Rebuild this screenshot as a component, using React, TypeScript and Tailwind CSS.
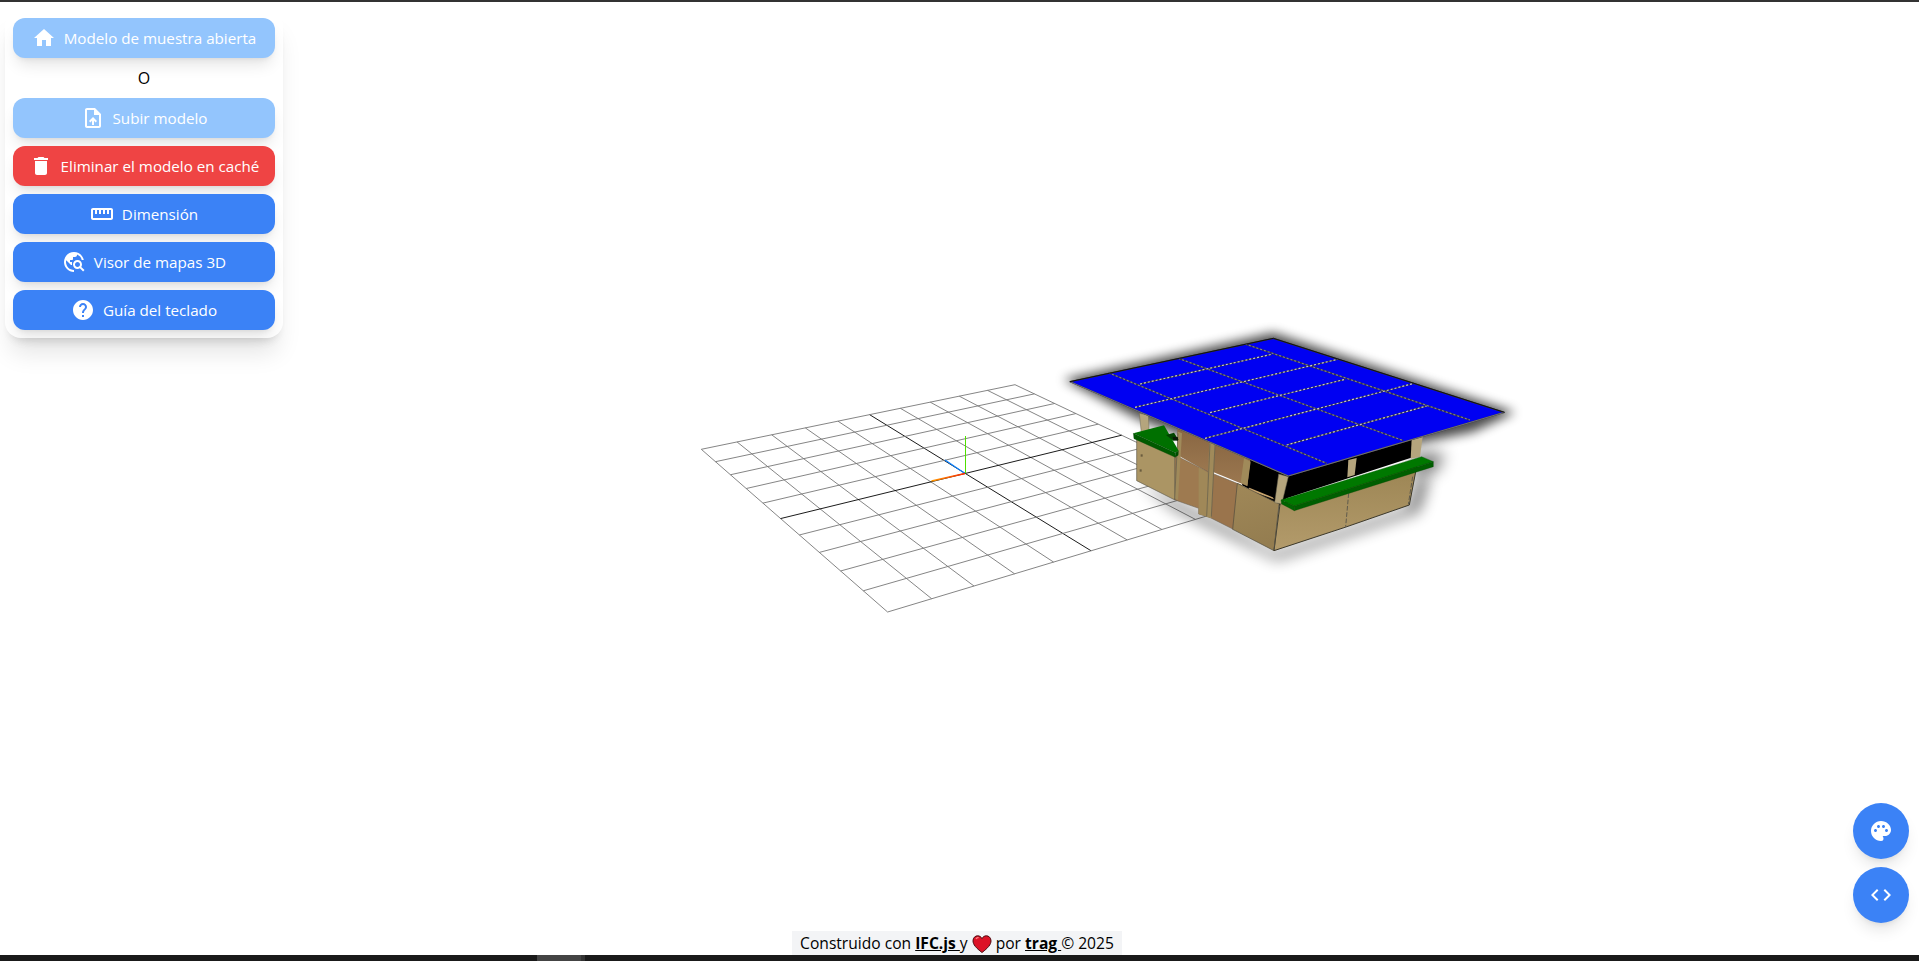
import React from "react";
import { MdHome, MdOutlineUploadFile, MdDelete, MdOutlineStraighten, MdTravelExplore, MdHelp, MdPalette, MdCode } from "react-icons/md";

type P = [number, number];

function homography(a: P, b: P, c: P, d: P) {
  const [x0, y0] = a, [x1, y1] = b, [x2, y2] = c, [x3, y3] = d;
  const dx1 = x1 - x2, dx2 = x3 - x2, sx = x0 - x1 + x2 - x3;
  const dy1 = y1 - y2, dy2 = y3 - y2, sy = y0 - y1 + y2 - y3;
  const den = dx1 * dy2 - dx2 * dy1;
  const g = (sx * dy2 - dx2 * sy) / den;
  const h = (dx1 * sy - sx * dy1) / den;
  const A = x1 - x0 + g * x1, B = x3 - x0 + h * x3, C = x0;
  const D = y1 - y0 + g * y1, E = y3 - y0 + h * y3, F = y0;
  return (u: number, v: number): P => {
    const w = g * u + h * v + 1;
    return [(A * u + B * v + C) / w, (D * u + E * v + F) / w];
  };
}

const grid = homography([701.3, 449.3], [1015, 384.7], [1258.9, 500.3], [887.6, 612]);
const steps = Array.from({ length: 11 }, (_, i) => i);

function GridLine({ a, b, color }: { a: P; b: P; color: string }) {
  return <line x1={a[0]} y1={a[1]} x2={b[0]} y2={b[1]} stroke={color} strokeWidth={0.9} />;
}

const longSeams: [number, number, number, number][] = [
  [205, 158, 860, 430],
  [415, 115, 1090, 362],
  [615, 72, 1290, 300],
];
const crossSeams: [number, number, number, number][] = [
  [300, 192, 695, 103],
  [285, 262, 893, 118],
  [510, 278, 915, 178],
  [495, 355, 1122, 190],
  [740, 375, 1160, 258],
];

function Scene() {
  const roof = "90,185 700,55 1393,277 745,468";
  return (
    <svg className="absolute top-0 left-0 pointer-events-none" width={1919} height={961} viewBox="0 0 1919 961">
      <defs>
        <filter id="blurA" filterUnits="userSpaceOnUse" x="-200" y="-200" width="2000" height="1200">
          <feGaussianBlur stdDeviation="16" />
        </filter>
        <filter id="blurB" filterUnits="userSpaceOnUse" x="-200" y="-200" width="2000" height="1200">
          <feGaussianBlur stdDeviation="22" />
        </filter>
        <linearGradient id="tanFront" x1="0" y1="0" x2="0.2" y2="1">
          <stop offset="0" stopColor="#a08858" />
          <stop offset="1" stopColor="#947d50" />
        </linearGradient>
        <linearGradient id="tanRight" x1="0" y1="0" x2="0" y2="1">
          <stop offset="0" stopColor="#9c8554" />
          <stop offset="1" stopColor="#b39b6b" />
        </linearGradient>
        <linearGradient id="brownWall" x1="0" y1="0" x2="0" y2="1">
          <stop offset="0" stopColor="#886642" />
          <stop offset="1" stopColor="#9c7850" />
        </linearGradient>
        <linearGradient id="redAxis" x1="0" y1="0" x2="1" y2="0">
          <stop offset="0" stopColor="#ff9900" />
          <stop offset="1" stopColor="#ff2a00" />
        </linearGradient>
      </defs>

      {steps.map((i) => (
        <GridLine key={`u${i}`} a={grid(i / 10, 0)} b={grid(i / 10, 1)} color={i === 5 ? "#000000" : "#777777"} />
      ))}
      {steps.map((i) => (
        <GridLine key={`v${i}`} a={grid(0, i / 10)} b={grid(1, i / 10)} color={i === 5 ? "#000000" : "#777777"} />
      ))}

      <line x1="965.5" y1="436" x2="965.5" y2="473.5" stroke="#4fe000" strokeWidth={1} />
      <line x1="945" y1="460" x2="965" y2="473.5" stroke="#0a80ff" strokeWidth={1.2} />
      <line x1="931.5" y1="481" x2="965" y2="473.5" stroke="url(#redAxis)" strokeWidth={1.4} />

      <g transform="translate(1040 320) scale(0.33333)">
        {/* soft shadows */}
        <polygon points="295,480 410,545 580,630 705,700 1105,565 1135,470 1165,480 1135,575 710,718 400,565" fill="#000" opacity="0.62" filter="url(#blurB)" />
        <polygon points="1120,395 1215,400 1190,455 1120,475" fill="#000" opacity="0.5" filter="url(#blurB)" />
        <polygon points="70,178 700,38 1425,277 1300,335 1110,375 745,470 300,300" fill="#000" opacity="0.7" filter="url(#blurA)" />

        {/* interior */}
        <polygon points="625,415 1118,340 1118,412 740,535 718,558 606,496" fill="#000" />
        <polygon points="628,503 698,532 702,538 625,510" fill="#c9a56e" />

        {/* left tan wall */}
        <polygon points="290,350 405,405 405,540 290,482" fill="#ab9564" stroke="#5f5a4c" strokeWidth="2" />
        <rect x="302" y="403" width="6" height="7" fill="#6a5c3e" />
        <rect x="299" y="448" width="6" height="7" fill="#6a5c3e" />

        {/* brown walls */}
        <polygon points="412,325 510,350 510,460 412,405" fill="url(#brownWall)" />
        <polygon points="510,350 632,410 622,498 510,452" fill="url(#brownWall)" />
        <polygon points="405,405 510,458 510,592 476,582 476,565 405,540" fill="#9e7a50" stroke="#5f5a4c" strokeWidth="1.5" />
        <polygon points="476,442 505,458 505,592 476,582" fill="#a08858" />
        <polygon points="505,455 606,496 580,628 505,590" fill="#9a744c" stroke="#5f5a4c" strokeWidth="1.5" />

        {/* front tan */}
        <polygon points="592,490 718,552 702,692 578,628" fill="url(#tanFront)" stroke="#4f4a3c" strokeWidth="2" />
        <polygon points="720,552 1130,440 1108,555 915,622 702,692" fill="url(#tanRight)" stroke="#3a3628" strokeWidth="3" />

        {/* seams on walls */}
        <polygon points="414,335 426,340 414,540 403,535" fill="#a08a5a" />
        <line x1="414" y1="340" x2="404" y2="538" stroke="#5f5a4c" strokeWidth="2" />
        <polygon points="508,365 526,372 514,595 498,590" fill="#a08a5a" />
        <line x1="510" y1="370" x2="500" y2="590" stroke="#5f5a4c" strokeWidth="2" />
        <line x1="525" y1="375" x2="514" y2="590" stroke="#5f5a4c" strokeWidth="2" />
        <polygon points="612,415 632,425 622,498 602,488" fill="#a08a5a" />
        <line x1="717" y1="555" x2="702" y2="690" stroke="#5f5a4c" strokeWidth="2" />
        <line x1="926" y1="520" x2="917" y2="620" stroke="#5f5a4c" strokeWidth="3" strokeDasharray="14 5" />
        <line x1="1118" y1="470" x2="1105" y2="553" stroke="#5f5a4c" strokeWidth="3" strokeDasharray="14 5" />

        {/* posts */}
        <polygon points="298,280 325,285 328,345 305,348" fill="#b5a57d" stroke="#6b6550" strokeWidth="1.5" />
        <polygon points="716,462 745,470 725,552 704,548" fill="#b5a57d" stroke="#6b6550" strokeWidth="1.5" />
        <polygon points="925,420 950,414 944,465 922,472" fill="#b5a57d" />
        <polygon points="1115,358 1148,350 1140,410 1112,416" fill="#b5a57d" />

        {/* left green */}
        <polygon points="280,340 372,316 416,392 406,398" fill="#007000" />
        <polygon points="280,340 406,398 406,412 282,356" fill="#005a00" stroke="#003f00" strokeWidth="1" />
        <polygon points="406,398 416,392 415,406 406,412" fill="#004c00" />
        <polygon points="378,345 402,338 416,360 400,362" fill="#004400" />
        <polygon points="398,350 414,352 414,362 400,360" fill="#0a1a0a" />

        {/* right green */}
        <polygon points="723,540 1145,410 1180,425 763,558" fill="#007800" stroke="#005000" strokeWidth="1" />
        <polygon points="763,558 1180,425 1180,440 763,572" fill="#005e00" stroke="#004a00" strokeWidth="1" />
        <polygon points="723,540 763,558 763,572 725,552" fill="#006400" stroke="#004a00" strokeWidth="1" />

        {/* roof */}
        <polygon points={roof} fill="#0000f2" stroke="#3a3a3a" strokeWidth="3.5" strokeLinejoin="round" />
        {[...longSeams, ...crossSeams].map(([x1, y1, x2, y2], i) => (
          <g key={i}>
            <line x1={x1} y1={y1} x2={x2} y2={y2} stroke="#34344a" strokeWidth="4" />
            <line x1={x1} y1={y1} x2={x2} y2={y2} stroke={i < 3 ? "#80808a" : "#c8c8c4"} strokeWidth="3.5" strokeDasharray="6 6" />
          </g>
        ))}
        <polyline points="90,185 745,468 1393,277" fill="none" stroke="#6e6e78" strokeWidth="3" />
        <polyline points="90,185 700,55 1393,277" fill="none" stroke="#111" strokeWidth="3" />
      </g>
    </svg>
  );
}

function Btn({ icon, label, color }: { icon: React.ReactNode; label: string; color: string }) {
  return (
    <button className={`flex h-10 w-full items-center justify-center gap-2 rounded-xl text-[15.2px] text-white shadow-lg ${color}`}>
      {icon}
      <span>{label}</span>
    </button>
  );
}

function Heart() {
  return (
    <svg width="20" height="20" viewBox="0 0 20 20" className="mx-1 inline-block">
      <path d="M10 18.5 C4 14 1 10.5 1 6.8 C1 3.8 3.2 1.8 5.7 1.8 C7.5 1.8 9.1 2.8 10 4.6 C10.9 2.8 12.5 1.8 14.3 1.8 C16.8 1.8 19 3.8 19 6.8 C19 10.5 16 14 10 18.5 Z" fill="#dc1226" stroke="#4a0a10" strokeWidth="1" />
      <path d="M4 5 C4.5 3.8 5.6 3.4 6.6 3.6" fill="none" stroke="#ff8a8a" strokeWidth="1.2" />
    </svg>
  );
}

export default function App() {
  return (
    <div className="relative flex h-[961px] w-[1919px] flex-col overflow-hidden bg-white font-['Open_Sans',sans-serif] text-black">
      <div className="h-[2px] bg-[#333333]" />
      <Scene />
      <div className="relative flex-1">
        <div className="absolute left-[5px] top-2 flex w-[278px] flex-col gap-2 rounded-2xl bg-white p-2 shadow-xl">
          <div className="flex flex-col">
            <Btn color="bg-[#93c5fd]" label="Modelo de muestra abierta" icon={<MdHome size={24} />} />
            <div className="flex h-10 items-center justify-center text-base">O</div>
            <Btn color="bg-[#93c5fd]" label="Subir modelo" icon={<MdOutlineUploadFile size={24} />} />
          </div>
          <Btn color="bg-[#ef4444]" label="Eliminar el modelo en caché" icon={<MdDelete size={24} />} />
          <Btn color="bg-[#3b82f6]" label="Dimensión" icon={<MdOutlineStraighten size={24} />} />
          <Btn color="bg-[#3b82f6]" label="Visor de mapas 3D" icon={<MdTravelExplore size={24} />} />
          <Btn color="bg-[#3b82f6]" label="Guía del teclado" icon={<MdHelp size={24} />} />
        </div>

        <div className="absolute bottom-8 right-[10px] flex flex-col gap-2">
          <button className="flex h-14 w-14 items-center justify-center rounded-full bg-[#3b82f6] text-white shadow-lg">
            <MdPalette size={24} />
          </button>
          <button className="flex h-14 w-14 items-center justify-center rounded-full bg-[#3b82f6] text-white shadow-lg">
            <MdCode size={24} />
          </button>
        </div>

        <div className="absolute inset-x-0 bottom-0 flex justify-center pr-[5px]">
          <div className="flex h-6 items-center whitespace-pre bg-[#f3f4f6] px-2 pt-px text-[15.6px]">
            <span>Construido con </span>
            <a className="font-bold underline">IFC.js </a>
            <span>y</span>
            <Heart />
            <span>por </span>
            <a className="font-bold underline">trag </a>
            <span>© 2025</span>
          </div>
        </div>
      </div>
      <div className="flex h-[6px] bg-[#1a1a1a]">
        <div className="ml-[537px] w-[44px] bg-[#444444]" />
        <div className="w-1 bg-[#333333]" />
      </div>
    </div>
  );
}
